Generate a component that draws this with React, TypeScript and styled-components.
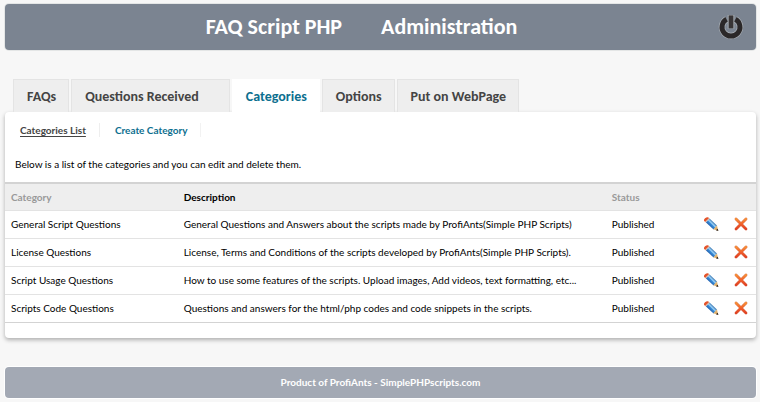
import React from "react";
import styled, { createGlobalStyle, css } from "styled-components";

const GlobalStyle = createGlobalStyle`
  * { box-sizing: border-box; }
  body {
    margin: 0;
    background: #f7f7f7;
    color: #000;
    font: 10px/14px Lato, sans-serif;
  }
  h1, p { margin: 0; }
`;

const Page = styled.div`
  padding: 4px 4px 4px 5px;
`;

const Header = styled.header`
  display: flex;
  align-items: center;
  height: 46px;
  padding: 0 12px 0 0;
  border-radius: 4px;
  background: #7b8491;
  box-shadow: 0 0 0 1px #e4e6e6;
`;

const Title = styled.h1`
  flex: 1;
  display: flex;
  justify-content: center;
  gap: 39px;
  color: #fff;
  font-family: Carlito, Calibri, Lato, sans-serif;
  font-size: 22px;
  line-height: 24px;
  font-weight: 700;
`;

const IconButton = styled.button`
  display: block;
  padding: 0;
  border: 0;
  background: none;
  cursor: pointer;
  svg { display: block; }
`;

const Tabs = styled.nav`
  display: flex;
  gap: 2px;
  padding: 29px 8px 0;
`;

const Tab = styled.a<{ $active?: boolean; $wide?: boolean }>`
  height: 33px;
  padding: 0 ${(p) => (p.$wide ? 30 : 12)}px 0 13px;
  border: 1px solid #e4e4e4;
  border-bottom: 0;
  background: #eee;
  color: #444;
  font-family: Carlito, Calibri, Lato, sans-serif;
  font-size: 14px;
  line-height: 34px;
  font-weight: 700;
  text-decoration: none;
  white-space: nowrap;
  ${(p) =>
    p.$active &&
    css`
      border-color: #fff;
      background: #fff;
      color: #0d6f8f;
    `}
`;

const Panel = styled.main`
  padding-bottom: 15px;
  border-radius: 4px;
  background: #fff;
  box-shadow: 0 2px 4px rgba(0, 0, 0, 0.3);
`;

const SubNav = styled.nav`
  display: flex;
  padding: 11px 0 0;
`;

const SubLink = styled.a<{ $current?: boolean }>`
  padding: 0 13px 0 15px;
  border-right: 1px solid ${(p) => (p.$current ? "#eee" : "#f2f2f2")};
  color: ${(p) => (p.$current ? "#444" : "#0d6f8f")};
  font-weight: 700;
  text-decoration: ${(p) => (p.$current ? "underline" : "none")};
  text-underline-offset: 2px;
`;

const Intro = styled.p`
  padding: 20px 10px 11px;
`;

const Table = styled.table`
  width: 100%;
  table-layout: fixed;
  border-collapse: collapse;
  border-top: 2px solid #d3d3d3;
  border-bottom: 1px solid #d3d3d3;
`;

const Column = styled.col<{ $width?: string }>`
  width: ${(p) => p.$width ?? "auto"};
`;

const HeadRow = styled.tr`
  height: 27px;
  background: #eee;
`;

const HeadCell = styled.th<{ $strong?: boolean }>`
  padding: 0 6px;
  color: ${(p) => (p.$strong ? "#000" : "#999")};
  text-align: left;
  font-weight: 700;
`;

const Row = styled.tr`
  height: 28px;
  border-top: 1px solid #e3e3e3;
`;

const Cell = styled.td`
  padding: 0 6px;
  white-space: nowrap;
`;

const Footer = styled.footer`
  margin-top: 29px;
  padding: 8px;
  border-radius: 4px;
  background: #a3a9b4;
  box-shadow: 0 0 0 1px #fff;
  color: #fff;
  font-weight: 700;
  line-height: 15px;
  text-align: center;
`;

const PowerIcon = () => (
  <svg width="26" height="26" viewBox="0 0 26 26" fill="none" aria-hidden="true">
    <path d="M8.6 5.2a9 9 0 1 0 8.8 0" stroke="#aeb4ba" strokeWidth="6.4" />
    <path d="M13 1v13.6" stroke="#aeb4ba" strokeWidth="6.6" />
    <path d="M8.6 5.2a9 9 0 1 0 8.8 0" stroke="#2b2829" strokeWidth="5" />
    <path d="M13 1.4v13" stroke="#383536" strokeWidth="4.8" />
  </svg>
);

const PencilIcon = () => (
  <svg width="16" height="16" viewBox="0 0 16 16" aria-hidden="true">
    <defs>
      <linearGradient id="pencilBody" x1="5" y1="11" x2="11" y2="5" gradientUnits="userSpaceOnUse">
        <stop offset="0.2" stopColor="#1d5cab" />
        <stop offset="0.5" stopColor="#3d91dc" />
        <stop offset="0.62" stopColor="#a5d8fa" />
        <stop offset="0.8" stopColor="#4a86bd" />
      </linearGradient>
    </defs>
    <path d="M1 4.8Q.6 3.6 2 2.3T5 1.2L6.3 2.3 2.4 6.2Z" fill="#e5532a" />
    <path d="M2.2 5.8 6 2l1.2 1L3.3 7Z" fill="#d7c2b5" />
    <path d="M3 6.6 6.8 2.8 14 9.6 10.6 13.4Z" fill="url(#pencilBody)" />
    <path d="M10.3 13.2 14 9.6 15.2 14.7Z" fill="#dfb06d" />
    <path d="M12.8 14.2 14.8 12.8 15.4 15Z" fill="#302722" />
  </svg>
);

const DeleteIcon = () => (
  <svg width="14" height="14" viewBox="0 0 14 14" fill="none" aria-hidden="true">
    <defs>
      <linearGradient id="crossFill" x1="0" y1="1" x2="0" y2="13" gradientUnits="userSpaceOnUse">
        <stop stopColor="#f79a3a" />
        <stop offset="0.5" stopColor="#f1602b" />
        <stop offset="1" stopColor="#dc3a20" />
      </linearGradient>
    </defs>
    <path d="M2 2 12 12M12 2 2 12" stroke="#d8694a" strokeWidth="2.8" strokeLinecap="round" />
    <path d="M2 2 12 12M12 2 2 12" stroke="url(#crossFill)" strokeWidth="2.2" strokeLinecap="round" />
  </svg>
);

const tabs = [
  { label: "FAQs" },
  { label: "Questions Received", wide: true },
  { label: "Categories", active: true },
  { label: "Options" },
  { label: "Put on WebPage" },
];

const categories = [
  ["General Script Questions", "General Questions and Answers about the scripts made by ProfiAnts(Simple PHP Scripts)"],
  ["License Questions", "License, Terms and Conditions of the scripts developed by ProfiAnts(Simple PHP Scripts)."],
  ["Script Usage Questions", "How to use some features of the scripts. Upload images, Add videos, text formatting, etc..."],
  ["Scripts Code Questions", "Questions and answers for the html/php codes and code snippets in the scripts."],
];

export default function App() {
  return (
    <>
      <GlobalStyle />
      <Page>
        <Header>
          <Title>
            <span>FAQ Script PHP</span>
            <span>Administration</span>
          </Title>
          <IconButton type="button" aria-label="Log out">
            <PowerIcon />
          </IconButton>
        </Header>
        <Tabs>
          {tabs.map((tab) => (
            <Tab key={tab.label} href="#" $active={tab.active} $wide={tab.wide}>
              {tab.label}
            </Tab>
          ))}
        </Tabs>
        <Panel>
          <SubNav>
            <SubLink href="#" $current>Categories List</SubLink>
            <SubLink href="#">Create Category</SubLink>
          </SubNav>
          <Intro>Below is a list of the categories and you can edit and delete them.</Intro>
          <Table>
            <colgroup>
              <Column $width="23%" />
              <Column $width="57%" />
              <Column />
              <Column $width="31px" />
              <Column $width="28px" />
            </colgroup>
            <thead>
              <HeadRow>
                <HeadCell>Category</HeadCell>
                <HeadCell $strong>Description</HeadCell>
                <HeadCell>Status</HeadCell>
                <HeadCell aria-label="Edit" />
                <HeadCell aria-label="Delete" />
              </HeadRow>
            </thead>
            <tbody>
              {categories.map(([name, description]) => (
                <Row key={name}>
                  <Cell>{name}</Cell>
                  <Cell>{description}</Cell>
                  <Cell>Published</Cell>
                  <Cell>
                    <IconButton type="button" aria-label={`Edit ${name}`}>
                      <PencilIcon />
                    </IconButton>
                  </Cell>
                  <Cell>
                    <IconButton type="button" aria-label={`Delete ${name}`}>
                      <DeleteIcon />
                    </IconButton>
                  </Cell>
                </Row>
              ))}
            </tbody>
          </Table>
        </Panel>
        <Footer>Product of ProfiAnts - SimplePHPscripts.com</Footer>
      </Page>
    </>
  );
}
